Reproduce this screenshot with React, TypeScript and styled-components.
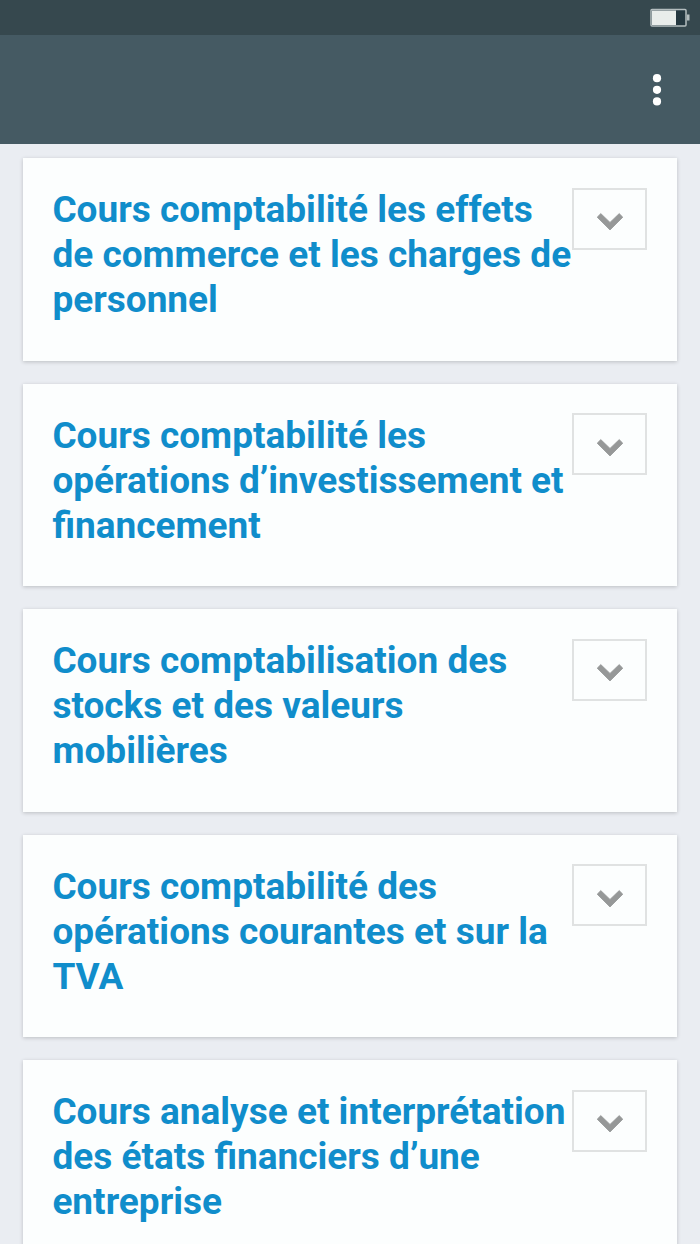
import React from "react";
import styled, { createGlobalStyle } from "styled-components";

const GlobalStyle = createGlobalStyle`
  * { box-sizing: border-box; }
  html, body { margin: 0; padding: 0; background: #e9edf2; overflow: hidden; }
  body { font-family: Roboto, "Liberation Sans", sans-serif; }
`;

const Screen = styled.div`
  height: 1244px;
  overflow: hidden;
  background: #eaedf2;
`;

const StatusBar = styled.div`
  height: 35px;
  padding: 8px 10px 0 0;
  display: flex;
  justify-content: flex-end;
  background: #36484e;
`;

const AppBar = styled.header`
  height: 109px;
  padding: 0 38px 0 0;
  display: flex;
  align-items: center;
  justify-content: flex-end;
  background: #455a63;
`;

const MenuButton = styled.button`
  display: flex;
  border: 0;
  padding: 0;
  background: none;
`;

const CourseList = styled.main`
  display: flex;
  flex-direction: column;
  gap: 23.2px;
  padding: 14.4px 23px 0;
`;

const Card = styled.article`
  flex: none;
  height: 202.3px;
  padding: 29.2px 30px 0 29.4px;
  display: flex;
  align-items: flex-start;
  justify-content: space-between;
  background: #fcfefe;
  box-shadow: 0 1px 4px rgba(0, 0, 0, 0.2);
`;

const Title = styled.h2`
  margin: 0;
  padding-top: 0.9px;
  font-size: 37px;
  line-height: 44.8px;
  font-weight: 700;
  white-space: nowrap;
  color: #108dcb;
`;

const Toggle = styled.button`
  flex: none;
  width: 75px;
  height: 62px;
  margin-left: -30px;
  padding: 7px 0 0;
  display: flex;
  align-items: center;
  justify-content: center;
  border: 2px solid #e0e2e2;
  background: #fcfefe;
`;

const courses = [
  ["Cours comptabilité les effets", "de commerce et les charges de", "personnel"],
  ["Cours comptabilité les", "opérations d’investissement et", "financement"],
  ["Cours comptabilisation des", "stocks et des valeurs", "mobilières"],
  ["Cours comptabilité des", "opérations courantes et sur la", "TVA"],
  ["Cours analyse et interprétation", "des états financiers d’une", "entreprise"],
];

const Battery = () => (
  <svg width="40" height="20" viewBox="0 0 40 20">
    <rect x="1" y="1.5" width="35" height="16.5" rx="1" fill="#253840" stroke="#b4bdbf" strokeWidth="1.5" />
    <rect x="2" y="2.5" width="24" height="14.5" fill="#e9edeb" />
    <rect x="37" y="6.5" width="2.5" height="6" fill="#b4bdbf" />
  </svg>
);

const Dots = () => (
  <svg width="10" height="32" viewBox="0 0 10 32" fill="#fff">
    <circle cx="5" cy="4.2" r="4.1" />
    <circle cx="5" cy="15.8" r="4.1" />
    <circle cx="5" cy="27.4" r="4.1" />
  </svg>
);

const Chevron = () => (
  <svg width="28" height="20" viewBox="0 0 28 20">
    <path
      d="M1.2 5.2 L4.8 1.6 L14 10.4 L23.2 1.6 L26.8 5.2 L14 18 Z"
      fill="#969898"
      stroke="#969898"
      strokeWidth="0.8"
      strokeLinejoin="round"
    />
  </svg>
);

export default function App() {
  return (
    <Screen>
      <GlobalStyle />
      <StatusBar><Battery /></StatusBar>
      <AppBar><MenuButton aria-label="Menu"><Dots /></MenuButton></AppBar>
      <CourseList>
        {courses.map((lines) => (
          <Card key={lines.join(" ")}>
            <Title>
              {lines.map((line) => <div key={line}>{line}</div>)}
            </Title>
            <Toggle aria-label="Ouvrir"><Chevron /></Toggle>
          </Card>
        ))}
      </CourseList>
    </Screen>
  );
}
